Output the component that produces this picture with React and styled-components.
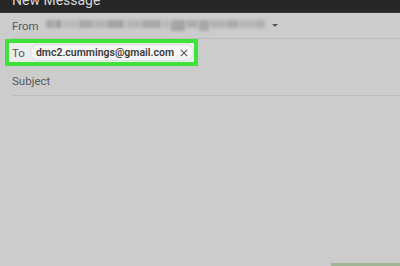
import React from 'react';
import styled, { createGlobalStyle } from 'styled-components';

const GlobalStyle = createGlobalStyle`
  html, body {
    margin: 0;
    padding: 0;
    background: #cccccc;
  }
  body {
    font-family: Roboto, 'Liberation Sans', Arial, sans-serif;
  }
`;

const Window = styled.div`
  width: 400px;
  height: 266px;
  background: #cccccc;
  display: flex;
  flex-direction: column;
  overflow: hidden;
`;

const Header = styled.div`
  height: 12px;
  background: #262626;
  overflow: hidden;
  padding-left: 12px;
  border-bottom: 1px solid #3a3a3a;
  flex-shrink: 0;
`;

const HeaderTitle = styled.div`
  color: #d8d8d8;
  font-size: 14px;
  line-height: 14px;
  margin-top: -7px;
`;

const Row = styled.div`
  display: flex;
  align-items: center;
  height: ${({ h }) => h}px;
  margin-left: 12px;
  border-bottom: ${({ line }) => (line ? '1px solid #bdbdbd' : 'none')};
  flex-shrink: 0;
`;

const Label = styled.span`
  color: #585858;
  font-size: 11.5px;
`;

const Blur = styled.div`
  display: flex;
  align-items: flex-start;
  height: 11px;
  margin-left: 7px;
  filter: blur(1.6px);
`;

const BlurBlock = styled.span`
  display: inline-block;
  height: ${({ h }) => h || 8}px;
  width: ${({ w }) => w}px;
  background: ${({ c }) => c};
  margin-right: ${({ gap }) => gap ?? 1}px;
`;

const Caret = styled.span`
  width: 0;
  height: 0;
  margin-left: 6px;
  border-left: 3px solid transparent;
  border-right: 3px solid transparent;
  border-top: 3px solid #555;
`;

const Highlight = styled.div`
  display: flex;
  align-items: center;
  margin-left: 5px;
  width: 182px;
  height: 19px;
  border: 4px solid #3fe23a;
  background: #ececec;
  padding-left: 3px;
  flex-shrink: 0;
`;

const Chip = styled.div`
  display: flex;
  align-items: center;
  margin-left: 5px;
  height: 15px;
  padding: 0 5px 0 5px;
  border: 1px solid #dcdcdc;
  border-radius: 9px;
  background: #f6f6f6;
`;

const ChipText = styled.span`
  font-size: 10.5px;
  font-weight: 600;
  color: #3a3a3a;
`;

const Close = styled.svg`
  margin-left: 6px;
  width: 8px;
  height: 8px;
`;

const Body = styled.div`
  flex: 1;
  display: flex;
  justify-content: flex-end;
  align-items: flex-end;
`;

const SendEdge = styled.div`
  width: 69px;
  height: 3px;
  background: #a2b598;
`;

const blocks = [
  { w: 9, c: '#a8a8a8' },
  { w: 5, c: '#9c9c9c' },
  { w: 16, c: '#bababa' },
  { w: 14, c: '#a8a8a8' },
  { w: 12, c: '#b3b3b3' },
  { w: 17, c: '#a3a3a3', gap: 2 },
  { w: 15, c: '#b5b5b5' },
  { w: 19, c: '#a9a9a9' },
  { w: 8, c: '#b9b9b9' },
  { w: 14, c: '#a5a5a5', h: 11 },
  { w: 12, c: '#adadad' },
  { w: 10, c: '#a8a8a8', h: 11 },
  { w: 16, c: '#b2b2b2' },
  { w: 12, c: '#ababab' },
  { w: 14, c: '#b7b7b7' },
  { w: 10, c: '#b0b0b0' },
];

const App = () => (
  <>
    <GlobalStyle />
    <Window>
      <Header>
        <HeaderTitle>New Message</HeaderTitle>
      </Header>
      <Row h={25} line>
        <Label>From</Label>
        <Blur>
          {blocks.map((b, i) => (
            <BlurBlock key={i} w={b.w} c={b.c} gap={b.gap} h={b.h} />
          ))}
        </Blur>
        <Caret />
      </Row>
      <Highlight>
        <Label>To</Label>
        <Chip>
          <ChipText>dmc2.cummings@gmail.com</ChipText>
          <Close viewBox="0 0 10 10">
            <path d="M1 1 L9 9 M9 1 L1 9" stroke="#555" strokeWidth="1.3" fill="none" />
          </Close>
        </Chip>
      </Highlight>
      <Row h={29} line>
        <Label>Subject</Label>
      </Row>
      <Body>
        <SendEdge />
      </Body>
    </Window>
  </>
);

export default App;
